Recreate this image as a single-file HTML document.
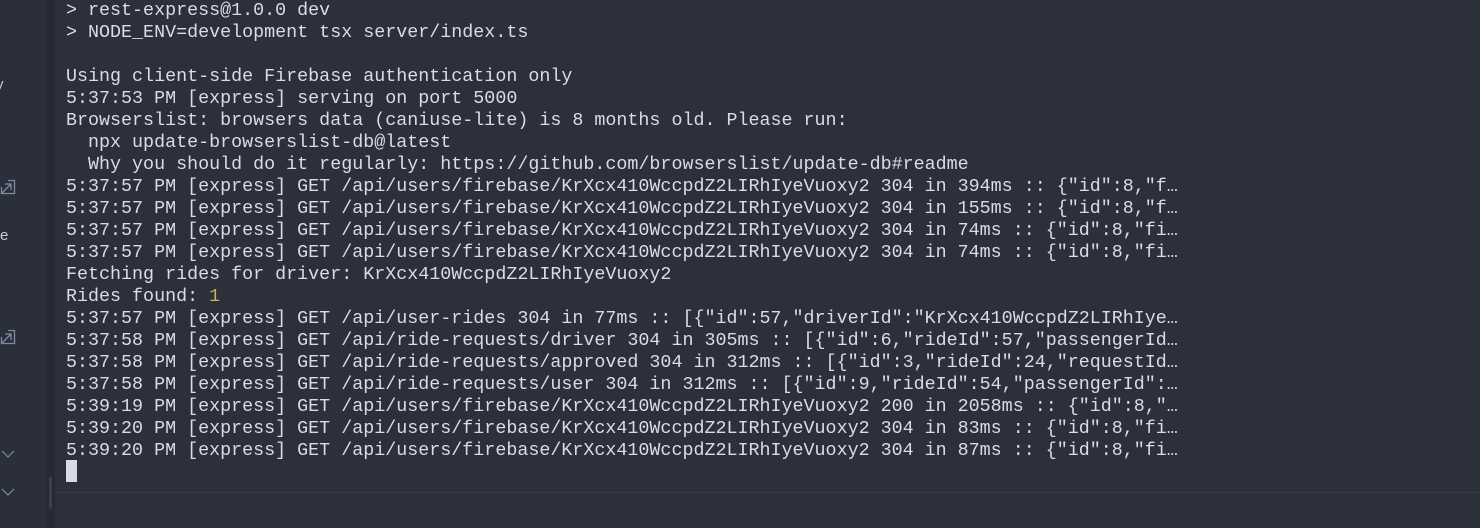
<!DOCTYPE html>
<html><head><meta charset="utf-8"><style>
html,body{margin:0;padding:0;width:1480px;height:528px;overflow:hidden;background:#2c303b;}
.side{position:absolute;left:0;top:0;width:46px;height:528px;background:#2b2f3a;}
.strip{position:absolute;left:46px;top:0;width:9px;height:528px;background:#262a33;}
.sb{position:absolute;left:49px;top:477px;width:3px;height:32px;background:#3a3f4b;border-radius:2px;}
.sep{position:absolute;left:55px;right:0;top:492px;height:1px;background:#363a46;}
pre{position:absolute;left:66px;top:0px;margin:0;font-family:"Liberation Mono",monospace;font-size:18.35px;line-height:22px;color:#d9dce3;white-space:pre;}
.y{color:#c8b25a}
.cur{position:absolute;left:66px;top:460px;width:11px;height:22px;background:#d7dbe6;}
.st{position:absolute;font-family:"Liberation Sans",sans-serif;color:#c9ccd3;font-size:15px;}
svg{position:absolute}
</style></head><body>
<div class="side"></div>
<div class="strip"></div>
<div class="sb"></div>
<div class="sep"></div>
<div class="st" style="left:-4px;top:76px">y</div>
<div class="st" style="left:0px;top:227px">e</div>
<svg style="left:0;top:179px" width="16" height="16" viewBox="0 0 16 16"><path d="M8 1.5h6.5v13h-13V8" fill="none" stroke="#7f8aa3" stroke-width="1.3"/><path d="M1 15L11 5M5 5h6v6" fill="none" stroke="#7f8aa3" stroke-width="1.3"/></svg>
<svg style="left:0;top:329px" width="16" height="16" viewBox="0 0 16 16"><path d="M8 1.5h6.5v13h-13V8" fill="none" stroke="#7f8aa3" stroke-width="1.3"/><path d="M1 15L11 5M5 5h6v6" fill="none" stroke="#7f8aa3" stroke-width="1.3"/></svg>
<svg style="left:1px;top:449px" width="14" height="10" viewBox="0 0 14 10"><path d="M1 2l6 6 6-6" fill="none" stroke="#7f8aa3" stroke-width="1.2"/></svg>
<svg style="left:1px;top:487px" width="14" height="10" viewBox="0 0 14 10"><path d="M1 2l6 6 6-6" fill="none" stroke="#7f8aa3" stroke-width="1.2"/></svg>
<pre>&gt; rest-express@1.0.0 dev
&gt; NODE_ENV=development tsx server/index.ts

Using client-side Firebase authentication only
5:37:53 PM [express] serving on port 5000
Browserslist: browsers data (caniuse-lite) is 8 months old. Please run:
  npx update-browserslist-db@latest
  Why you should do it regularly: https://github.com/browserslist/update-db#readme
5:37:57 PM [express] GET /api/users/firebase/KrXcx410WccpdZ2LIRhIyeVuoxy2 304 in 394ms :: {"id":8,"f…
5:37:57 PM [express] GET /api/users/firebase/KrXcx410WccpdZ2LIRhIyeVuoxy2 304 in 155ms :: {"id":8,"f…
5:37:57 PM [express] GET /api/users/firebase/KrXcx410WccpdZ2LIRhIyeVuoxy2 304 in 74ms :: {"id":8,"fi…
5:37:57 PM [express] GET /api/users/firebase/KrXcx410WccpdZ2LIRhIyeVuoxy2 304 in 74ms :: {"id":8,"fi…
Fetching rides for driver: KrXcx410WccpdZ2LIRhIyeVuoxy2
Rides found: <span class="y">1</span>
5:37:57 PM [express] GET /api/user-rides 304 in 77ms :: [{"id":57,"driverId":"KrXcx410WccpdZ2LIRhIye…
5:37:58 PM [express] GET /api/ride-requests/driver 304 in 305ms :: [{"id":6,"rideId":57,"passengerId…
5:37:58 PM [express] GET /api/ride-requests/approved 304 in 312ms :: [{"id":3,"rideId":24,"requestId…
5:37:58 PM [express] GET /api/ride-requests/user 304 in 312ms :: [{"id":9,"rideId":54,"passengerId":…
5:39:19 PM [express] GET /api/users/firebase/KrXcx410WccpdZ2LIRhIyeVuoxy2 200 in 2058ms :: {"id":8,"…
5:39:20 PM [express] GET /api/users/firebase/KrXcx410WccpdZ2LIRhIyeVuoxy2 304 in 83ms :: {"id":8,"fi…
5:39:20 PM [express] GET /api/users/firebase/KrXcx410WccpdZ2LIRhIyeVuoxy2 304 in 87ms :: {"id":8,"fi…</pre>
<div class="cur"></div>
</body></html>
